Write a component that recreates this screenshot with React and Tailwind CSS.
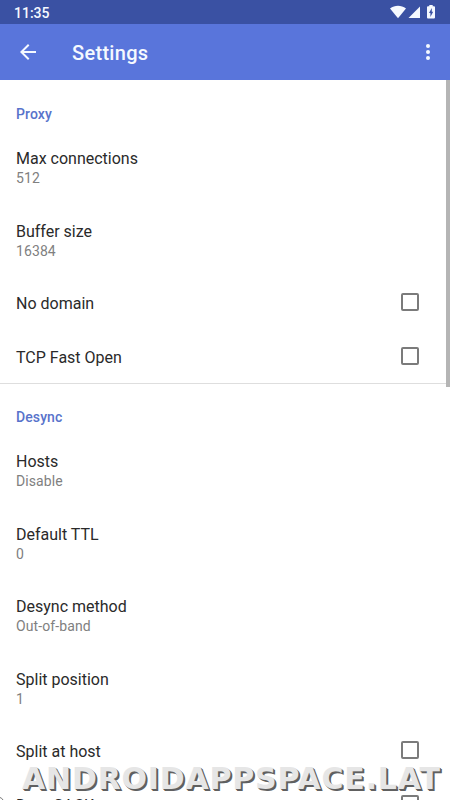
import React from 'react';

const sections = [
    {
        title: 'Proxy',
        items: [
            { label: 'Max connections', value: '512' },
            { label: 'Buffer size', value: '16384' },
            { label: 'No domain', checkbox: true },
            { label: 'TCP Fast Open', checkbox: true },
        ],
    },
    {
        title: 'Desync',
        items: [
            { label: 'Hosts', value: 'Disable' },
            { label: 'Default TTL', value: '0' },
            { label: 'Desync method', value: 'Out-of-band' },
            { label: 'Split position', value: '1' },
            { label: 'Split at host', checkbox: true },
            { label: 'Drop SACK', checkbox: true },
        ],
    },
];

function StatusBar() {
    return (
        <div className="flex h-6 shrink-0 items-center justify-between bg-[#3a51a3] pl-[14px] pr-[14px] text-[#f5f9ff]">
            <span className="pt-[2px] text-[14px] font-medium leading-5">11:35</span>
            {/* Wifi, signal and charging battery */}
            <svg width="46" height="14" viewBox="0 0 46 14" fill="#f5f9ff">
                <path d="M0 3.600C4.800-.1 11.200-.1 16 3.600L8 13.200Z" />
                <path d="M30 1.500V13H18.500Z" />
                <path fillRule="evenodd" d="M39.300 1.300V0h3.400v1.300h1.400c.5 0 .9.4.9.9v10.400c0 .5-.4.9-.9.9h-6.200c-.5 0-.9-.4-.9-.9V2.200c0-.5.4-.9.9-.9ZM41.800 3 39 8h1.400v3.900L43.200 6.800h-1.400Z" />
            </svg>
        </div>
    );
}

function AppBar() {
    return (
        <header className="flex h-14 shrink-0 items-center bg-[#5975db] pl-4 pr-[10px] text-[#f5f9ff]">
            <button aria-label="Back">
                <svg width="24" height="24" viewBox="0 0 24 24" fill="currentColor">
                    <path d="M20 11H7.830l5.590-5.590L12 4l-8 8 8 8 1.410-1.410L7.830 13H20v-2z" />
                </svg>
            </button>
            <h1 className="ml-8 flex-1 pt-[2px] text-[20px] font-medium leading-6 tracking-[0.3px]">Settings</h1>
            <button aria-label="More options">
                <svg width="24" height="24" viewBox="0 0 24 24" fill="currentColor">
                    <circle cx="12" cy="6" r="2" />
                    <circle cx="12" cy="12" r="2" />
                    <circle cx="12" cy="18" r="2" />
                </svg>
            </button>
        </header>
    );
}

function PreferenceRow({ label, value, checkbox }) {
    if (checkbox) {
        return (
            <div className="flex h-[53.5px] items-center justify-between pl-4 pr-[31px]">
                <span className="pt-[0.6px] text-[16px] leading-[22px] text-[#2a2a2a]">{label}</span>
                <span className="mb-[3px] size-[18px] rounded-[2px] border-2 border-[#7b7b7b]" />
            </div>
        );
    }
    return (
        <div className="h-[72.5px] px-4 pt-[16px]">
            <div className="text-[16px] leading-[22px] text-[#2a2a2a]">{label}</div>
            <div className="text-[14px] leading-[17px] tracking-[0.1px] text-[#808080]">{value}</div>
        </div>
    );
}

function App() {
    return (
        <div className="relative flex h-[800px] w-[450px] flex-col overflow-hidden bg-white font-['Roboto',sans-serif]">
            <StatusBar />
            <AppBar />
            <main className="min-h-0 flex-1 overflow-hidden">
                {sections.map((section, index) => (
                    <section key={section.title} className={index > 0 ? '-mt-px border-t border-[#dedede]' : ''}>
                        <h2 className={`px-4 text-[14px] font-medium leading-[20px] tracking-[0.1px] text-[#5873cb] ${index > 0 ? 'h-[51px] pt-[23px]' : 'h-[52px] pt-[24px]'}`}>
                            {section.title}
                        </h2>
                        {section.items.map((item) => (
                            <PreferenceRow key={item.label} {...item} />
                        ))}
                    </section>
                ))}
            </main>

            {/* Scroll thumb */}
            <div className="absolute right-0 top-20 h-[307px] w-1 bg-[#b5b5b5]" />

            {/* Rounded screen corner */}
            <svg className="absolute bottom-0 left-0" width="4" height="4" viewBox="0 0 4 4" fill="none" stroke="#777">
                <path d="M0 1.500Q2 2 3 4" />
            </svg>

            {/* Site mark laid over the list */}
            <div className="absolute left-[22px] top-[761px] whitespace-nowrap font-['DejaVu_Sans',sans-serif] text-[30px] font-bold leading-[36px] tracking-[0.8px] text-[#e6e6e6] [text-shadow:1px_1px_0_#606060,2px_2px_0_#606060]">
                ANDROIDAPPSPACE.LAT
            </div>
        </div>
    );
}

export default App;
